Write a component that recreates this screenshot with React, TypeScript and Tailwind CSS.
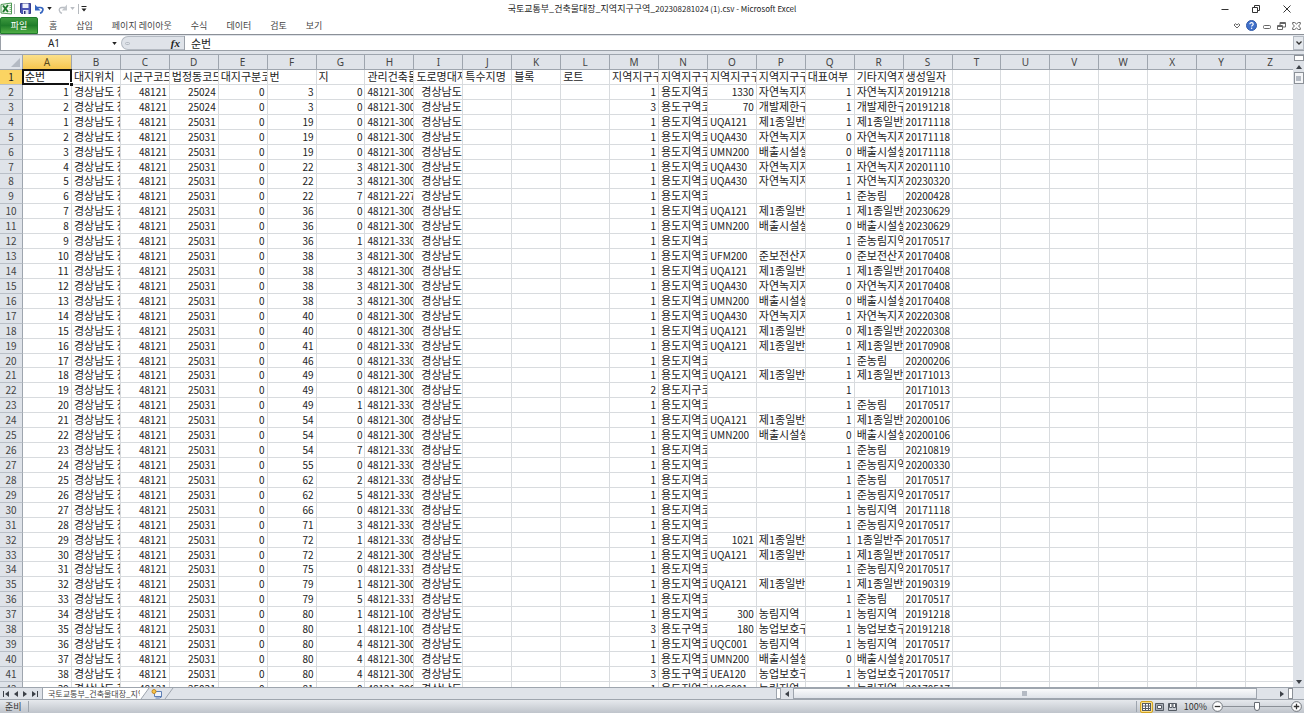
import React from 'react';
import { clsx } from 'clsx';

type Row = [
  no: number,
  dong: number,
  bun: number,
  ji: number,
  registry: string,
  kind: number,
  kindName: string,
  zoneCode: string | number,
  zoneName: string,
  main: number,
  etc: string,
  created: number
];

const AREA = '용도지역코';
const DISTRICT = '용도지구코';
const SECTION = '용도구역코';
const GREEN = '자연녹지지';
const HOUSE = '제1종일반';
const EMIT = '배출시설설';

const columns = 'ABCDEFGHIJKLMNOPQRSTUVWXYZ'.split('');

const headings = [
  '순번', '대지위치', '시군구코드', '법정동코드', '대지구분코', '번', '지', '관리건축물',
  '도로명대지', '특수지명', '블록', '로트', '지역지구구', '지역지구구', '지역지구구',
  '지역지구구', '대표여부', '기타지역지', '생성일자', '', '', '', '', '', '', '',
];

const rows: Row[] = [
  [1, 25024, 3, 0, '48121-300', 1, AREA, 1330, GREEN, 1, GREEN, 20191218],
  [2, 25024, 3, 0, '48121-300', 3, SECTION, 70, '개발제한구', 1, '개발제한구', 20191218],
  [1, 25031, 19, 0, '48121-300', 1, AREA, 'UQA121', HOUSE, 1, HOUSE, 20171118],
  [2, 25031, 19, 0, '48121-300', 1, AREA, 'UQA430', GREEN, 0, GREEN, 20171118],
  [3, 25031, 19, 0, '48121-300', 1, AREA, 'UMN200', EMIT, 0, EMIT, 20171118],
  [4, 25031, 22, 3, '48121-300', 1, AREA, 'UQA430', GREEN, 1, GREEN, 20201110],
  [5, 25031, 22, 3, '48121-300', 1, AREA, 'UQA430', GREEN, 1, GREEN, 20230320],
  [6, 25031, 22, 7, '48121-227', 1, AREA, '', '', 1, '준농림', 20200428],
  [7, 25031, 36, 0, '48121-300', 1, AREA, 'UQA121', HOUSE, 1, HOUSE, 20230629],
  [8, 25031, 36, 0, '48121-300', 1, AREA, 'UMN200', EMIT, 0, EMIT, 20230629],
  [9, 25031, 36, 1, '48121-330', 1, AREA, '', '', 1, '준농림지역', 20170517],
  [10, 25031, 38, 3, '48121-300', 1, AREA, 'UFM200', '준보전산지', 0, '준보전산지', 20170408],
  [11, 25031, 38, 3, '48121-300', 1, AREA, 'UQA121', HOUSE, 1, HOUSE, 20170408],
  [12, 25031, 38, 3, '48121-300', 1, AREA, 'UQA430', GREEN, 0, GREEN, 20170408],
  [13, 25031, 38, 3, '48121-300', 1, AREA, 'UMN200', EMIT, 0, EMIT, 20170408],
  [14, 25031, 40, 0, '48121-300', 1, AREA, 'UQA430', GREEN, 1, GREEN, 20220308],
  [15, 25031, 40, 0, '48121-300', 1, AREA, 'UQA121', HOUSE, 0, HOUSE, 20220308],
  [16, 25031, 41, 0, '48121-330', 1, AREA, 'UQA121', HOUSE, 1, HOUSE, 20170908],
  [17, 25031, 46, 0, '48121-330', 1, AREA, '', '', 1, '준농림', 20200206],
  [18, 25031, 49, 0, '48121-300', 1, AREA, 'UQA121', HOUSE, 1, HOUSE, 20171013],
  [19, 25031, 49, 0, '48121-300', 2, DISTRICT, '', '', 1, '', 20171013],
  [20, 25031, 49, 1, '48121-330', 1, AREA, '', '', 1, '준농림', 20170517],
  [21, 25031, 54, 0, '48121-300', 1, AREA, 'UQA121', HOUSE, 1, HOUSE, 20200106],
  [22, 25031, 54, 0, '48121-300', 1, AREA, 'UMN200', EMIT, 0, EMIT, 20200106],
  [23, 25031, 54, 7, '48121-330', 1, AREA, '', '', 1, '준농림', 20210819],
  [24, 25031, 55, 0, '48121-330', 1, AREA, '', '', 1, '준농림지역', 20200330],
  [25, 25031, 62, 2, '48121-330', 1, AREA, '', '', 1, '준농림', 20170517],
  [26, 25031, 62, 5, '48121-330', 1, AREA, '', '', 1, '준농림지역', 20170517],
  [27, 25031, 66, 0, '48121-330', 1, AREA, '', '', 1, '농림지역', 20171118],
  [28, 25031, 71, 3, '48121-330', 1, AREA, '', '', 1, '준농림지역', 20170517],
  [29, 25031, 72, 1, '48121-330', 1, AREA, 1021, HOUSE, 1, '1종일반주', 20170517],
  [30, 25031, 72, 2, '48121-300', 1, AREA, 'UQA121', HOUSE, 1, HOUSE, 20170517],
  [31, 25031, 75, 0, '48121-331', 1, AREA, '', '', 1, '준농림지역', 20170517],
  [32, 25031, 79, 1, '48121-300', 1, AREA, 'UQA121', HOUSE, 1, HOUSE, 20190319],
  [33, 25031, 79, 5, '48121-331', 1, AREA, '', '', 1, '준농림', 20170517],
  [34, 25031, 80, 1, '48121-100', 1, AREA, 300, '농림지역', 1, '농림지역', 20191218],
  [35, 25031, 80, 1, '48121-100', 3, SECTION, 180, '농업보호구', 1, '농업보호구', 20191218],
  [36, 25031, 80, 4, '48121-300', 1, AREA, 'UQC001', '농림지역', 1, '농림지역', 20170517],
  [37, 25031, 80, 4, '48121-300', 1, AREA, 'UMN200', EMIT, 0, EMIT, 20170517],
  [38, 25031, 80, 4, '48121-300', 3, SECTION, 'UEA120', '농업보호구', 1, '농업보호구', 20170517],
  [39, 25031, 81, 0, '48121-300', 1, AREA, 'UQC001', '농림지역', 1, '농림지역', 20170517],
];

const toCells = (r: Row): (string | number)[] => [
  r[0], '경상남도 창', 48121, r[1], 0, r[2], r[3], r[4], '  경상남도', '', '', '',
  r[5], r[6], r[7], r[8], r[9], r[10], r[11], '', '', '', '', '', '', '',
];

const isLatin = (value: string | number) => /^[\dA-Z-]+$/.test(String(value));

const Caret = ({ className }: { className?: string }) => (
  <svg viewBox="0 0 6 4" className={clsx('h-[3px] w-[5px] shrink-0', className)} fill="currentColor" aria-hidden="true">
    <path d="M0 0h6L3 4z" />
  </svg>
);

const Arrow = ({ dir, bar }: { dir: 'left' | 'right' | 'up' | 'down'; bar?: boolean }) => (
  <svg
    viewBox="0 0 8 8"
    className={clsx(
      'h-2 w-2',
      dir === 'left' && 'rotate-180',
      dir === 'up' && '-rotate-90',
      dir === 'down' && 'rotate-90'
    )}
    fill="#3c4148"
    aria-hidden="true"
  >
    <path d={bar ? 'M1 1l4 3-4 3zM6 1h1v6H6z' : 'M2 1l4 3-4 3z'} />
  </svg>
);

const TitleBar = () => (
  <header className="flex h-[17px] shrink-0 items-center bg-white">
    <div className="flex flex-1 items-center text-[#222]">
      <svg viewBox="0 0 13 13" className="h-[13px] w-[13px]" aria-hidden="true">
        <path d="M1 2.500L11.500 1v11L1 11z" fill="#f1f8ee" stroke="#4f9a56" />
        <path d="M9.500 3.500h1.500M9.500 5.500h1.500M9.500 7.500h1.500M9.500 9.500h1.500" stroke="#7fb582" />
        <path d="M3 3.500l5 6.500M8 3l-5 7" stroke="#217a2f" strokeWidth="2" />
      </svg>
      <span className="ml-px h-[10px] w-px bg-[#b5b9be]" />
      <button type="button" aria-label="저장" className="ml-[5px]">
        <svg viewBox="0 0 11 11" className="h-[11px] w-[11px]" aria-hidden="true">
          <path d="M0.5 0.5h10v10h-9l-1-1z" fill="#4b55b5" stroke="#343c8c" />
          <path d="M2.5 0.5h6v4.5h-6z" fill="#eef1fb" />
          <path d="M3 7h5.5v4H3z" fill="#dfe3f2" />
          <path d="M4 8h1.5v3H4z" fill="#2d3478" />
        </svg>
      </button>
      <button type="button" aria-label="실행 취소" className="ml-1">
        <svg viewBox="0 0 9 10" className="h-[10px] w-[9px]" fill="none" aria-hidden="true">
          <path d="M2 3.500h3.200c2.200 0 3 1.300 2.600 2.800C7.500 7.700 6.500 8.700 5 9.300" stroke="#3565c0" strokeWidth="1.700" />
          <path d="M0 0.500v6h5.500z" fill="#3565c0" />
        </svg>
      </button>
      <Caret className="ml-[3px]" />
      <button type="button" aria-label="다시 실행" className="ml-[6px]">
        <svg viewBox="0 0 9 10" className="h-[10px] w-[9px]" fill="none" aria-hidden="true">
          <path d="M7 3.500H4C1.800 3.500 1 4.800 1.300 6.300 1.500 7.700 2.500 8.700 4 9.300" stroke="#b9bdc3" strokeWidth="1.300" />
          <path d="M9 0.500v6H3.800z" fill="#c3c7cc" />
        </svg>
      </button>
      <Caret className="ml-[3px] text-[#b9bdc3]" />
      <span className="ml-[3px] h-[10px] w-px bg-[#b5b9be]" />
      <button type="button" aria-label="빠른 실행 도구 모음 사용자 지정" className="ml-[2px]">
        <svg viewBox="0 0 6 6" className="h-[6px] w-[6px]" aria-hidden="true">
          <path d="M0.500 0h5v1h-5zM0.500 2.500h5L3 5.500z" fill="#222" />
        </svg>
      </button>
    </div>
    <h1 className="whitespace-nowrap text-[8px] leading-[17px] text-[#222]">
      <span className="text-[9px]">국토교통부_건축물대장_지역지구구역_</span>202308281024 (1).csv - Microsoft Excel
    </h1>
    <div className="flex flex-1 items-center justify-end gap-[23px]">
      <button type="button" aria-label="최소화">
        <svg viewBox="0 0 8 8" className="h-2 w-2" aria-hidden="true">
          <path d="M0.500 4.500h7" stroke="#333" />
        </svg>
      </button>
      <button type="button" aria-label="이전 크기로">
        <svg viewBox="0 0 8 8" className="h-2 w-2" fill="none" stroke="#333" aria-hidden="true">
          <path d="M0.500 2.500h5v5h-5zM2.500 2V0.500h5v5H6" />
        </svg>
      </button>
      <button type="button" aria-label="닫기" className="mr-[13px]">
        <svg viewBox="0 0 8 8" className="h-2 w-2" stroke="#333" aria-hidden="true">
          <path d="M0.500 0.500l7 7M7.500 0.500l-7 7" />
        </svg>
      </button>
    </div>
  </header>
);

const RibbonTabs = () => (
  <nav className="flex h-[18px] shrink-0 border-b border-[#8b9097] bg-white text-[9px] leading-4 text-[#444]">
    <button
      type="button"
      className="w-[38px] rounded-t-[2px] border border-[#1f7a2a] bg-gradient-to-b from-[#3d9a3f] via-[#1f7d2a] to-[#4fae45] text-center leading-[15px] text-white"
    >
      파일
    </button>
    <div className="flex flex-1 gap-[19px] pl-[11px]">
      {['홈', '삽입', '페이지 레이아웃', '수식', '데이터', '검토', '보기'].map((tab) => (
        <button key={tab} type="button" className="whitespace-nowrap">
          {tab}
        </button>
      ))}
    </div>
    <div className="flex items-center gap-[5px] pr-[3px]">
      <button type="button" aria-label="리본 메뉴 최소화">
        <svg viewBox="0 0 8 6" className="h-[6px] w-2" fill="none" stroke="#666" aria-hidden="true">
          <path d="M1 2L2.500 0.700 4 2 5.500 0.700 7 2 4 5z" />
        </svg>
      </button>
      <button type="button" aria-label="도움말">
        <svg viewBox="0 0 12 12" className="h-[11px] w-[11px]" aria-hidden="true">
          <circle cx="6" cy="6" r="5.500" fill="#3f6fc9" stroke="#2c55a5" />
          <path d="M4.200 4.700C4.200 3.500 5 2.900 6 2.900s1.900.6 1.900 1.600C7.900 5.700 6.100 5.700 6.100 7.200" fill="none" stroke="#fff" strokeWidth="1.300" />
          <circle cx="6.100" cy="8.900" r="0.800" fill="#fff" />
        </svg>
      </button>
      <button type="button" aria-label="창 최소화" className="ml-px">
        <svg viewBox="0 0 8 8" className="h-2 w-2" fill="none" stroke="#666" aria-hidden="true">
          <rect x="0.500" y="3.500" width="7" height="3" rx="1" />
        </svg>
      </button>
      <button type="button" aria-label="창 복원" className="ml-px">
        <svg viewBox="0 0 9 8" className="h-2 w-[9px]" fill="none" stroke="#666" aria-hidden="true">
          <path d="M0.500 3.500h5v4h-5zM0.500 4.500h5M3 3V0.500h5.500v4.500H6M3 1.500h5.500" />
        </svg>
      </button>
      <button type="button" aria-label="창 닫기" className="ml-px">
        <svg viewBox="0 0 9 8" className="h-2 w-[9px]" fill="none" stroke="#666" aria-hidden="true">
          <path d="M0.700 0.500h2L4.500 2 6.300 0.500h2v1.800L6.500 4l1.800 1.700v1.800h-2L4.500 6 2.700 7.500h-2V5.700L2.500 4 0.700 2.300z" />
        </svg>
      </button>
    </div>
  </nav>
);

const FormulaBar = () => (
  <div className="flex h-[19px] shrink-0 bg-[#dfe3e9] pb-[3px] pt-px">
    <div className="flex flex-1 border-b border-[#9aa0a8] bg-white">
      <div className="flex w-[121px] items-center border-l border-[#9aa0a8]">
        <input
          aria-label="이름 상자"
          defaultValue="A1"
          className="w-[106px] min-w-0 bg-transparent text-center font-['Noto_Sans',sans-serif] text-[10px] leading-[14px] text-[#222] outline-none"
        />
        <button type="button" aria-label="이름 목록" className="ml-[5px] flex">
          <Caret className="text-[#222]" />
        </button>
      </div>
      <div className="flex w-[63px] items-center justify-between rounded-l-full border-y border-l border-[#b4bac2] bg-[#dfe3e9] pl-[3px] pr-1">
        <span className="h-[3px] w-[5px] rounded-full border border-[#b4bac2]" />
        <button type="button" aria-label="함수 삽입" className="font-['Liberation_Serif',serif] text-[11px] font-bold italic leading-3 text-[#222]">
          fx
        </button>
      </div>
      <input
        aria-label="수식 입력줄"
        defaultValue="순번"
        className="min-w-0 flex-1 border-l border-[#9aa0a8] bg-white pl-[6px] text-[11px] leading-[14px] text-[#222] outline-none"
      />
      <button
        type="button"
        aria-label="수식 입력줄 확장"
        className="flex w-[11px] items-center justify-center border border-[#b4bac2] bg-[#e3e7ec] text-[#333]"
      >
        <svg viewBox="0 0 6 4" className="h-1 w-[6px]" fill="none" stroke="currentColor" strokeWidth="1.300" aria-hidden="true">
          <path d="M0.500 0.500L3 3l2.500-2.500" />
        </svg>
      </button>
    </div>
  </div>
);

const headCell =
  'h-[15px] overflow-hidden border-b border-r border-[#9ea5ae] p-0 text-center text-[10px] font-normal leading-[14px]';
const rowHead =
  'border-b border-r border-b-[#b9bfc7] border-r-[#9ea5ae] p-0 text-center align-top text-[10px] font-normal leading-[13px]';

const Cell = ({ value }: { value: string | number }) => (
  <td
    className={clsx(
      'overflow-hidden whitespace-pre border-b border-r border-[#d8dbde] py-0 pl-[2px] pr-[2px] align-top leading-[13px]',
      isLatin(value) ? 'text-[10px]' : 'text-[11px]',
      typeof value === 'number' && 'text-right'
    )}
  >
    {value}
  </td>
);

/* The table is a little larger than its pane, so the last row runs under the sheet tabs. */
const Grid = () => (
  <div className="min-h-0 min-w-0 flex-1 overflow-hidden bg-white">
    <table className="h-[calc(100%+10px)] w-[calc(100%+2px)] table-fixed border-separate border-spacing-0 text-[#222]">
      <thead>
        <tr className="bg-[#dfe3e9] font-['Noto_Sans',sans-serif] text-[#444]">
          <th className="h-[15px] w-[23px] border-b border-r border-[#9ea5ae] p-0">
            <svg viewBox="0 0 10 10" className="ml-auto mr-[2px] h-[9px] w-[9px]" aria-hidden="true">
              <path d="M10 0v10H0z" fill="#b4bac3" />
            </svg>
          </th>
          {columns.map((name, i) => (
            <th
              key={name}
              scope="col"
              className={clsx(headCell, i === 0 && 'bg-gradient-to-b from-[#fbe08a] to-[#f6c64c] text-[#5a4a1c]')}
            >
              {name}
            </th>
          ))}
        </tr>
      </thead>
      <tbody>
        <tr>
          <th scope="row" className={clsx(rowHead, 'bg-[#fbd462]')}>
            1
          </th>
          {headings.map((text, i) =>
            i === 0 ? (
              <td key={i} className="relative px-[2px] py-0 align-top text-[11px] leading-[13px]">
                {text}
                <span className="absolute -inset-px bottom-0 right-0 border-2 border-[#111]" />
                <span className="absolute -bottom-px -right-px h-[4px] w-[4px] border-l border-t border-white bg-[#111]" />
              </td>
            ) : (
              <Cell key={i} value={text} />
            )
          )}
        </tr>
        {rows.map((row, r) => (
          <tr key={r}>
            <th scope="row" className={clsx(rowHead, 'bg-[#dfe3e9] text-[#444]')}>
              {r + 2}
            </th>
            {toCells(row).map((value, i) => (
              <Cell key={i} value={value} />
            ))}
          </tr>
        ))}
      </tbody>
    </table>
  </div>
);

const VerticalScroll = () => (
  <div className="flex w-[11px] shrink-0 flex-col items-center bg-[#dde1e7]">
    <span className="h-[6px] w-[10px] border border-[#8b9097] bg-white" />
    <button type="button" aria-label="위로 스크롤" className="flex h-[11px] items-center">
      <Arrow dir="up" />
    </button>
    <button
      type="button"
      aria-label="세로 스크롤 막대"
      className="flex h-[12px] w-[10px] items-center justify-center border border-[#8b9097] bg-[#f4f5f7]"
    >
      <span className="h-[5px] w-[5px] bg-[#b4bac3]" />
    </button>
    <span className="flex-1" />
    <button type="button" aria-label="아래로 스크롤" className="flex h-[11px] items-center">
      <Arrow dir="down" />
    </button>
  </div>
);

const SheetTabs = () => (
  <div className="flex h-3 shrink-0 border-t border-[#9ea5ae] bg-[#dfe3e9]">
    <div className="flex min-w-0 flex-[3]">
      <div className="flex w-[43px] items-center justify-between border-r border-[#9ea5ae] pl-[2px] pr-[3px]">
        <button type="button" aria-label="첫 시트" className="rotate-180">
          <Arrow dir="right" bar />
        </button>
        <button type="button" aria-label="이전 시트">
          <Arrow dir="left" />
        </button>
        <button type="button" aria-label="다음 시트">
          <Arrow dir="right" />
        </button>
        <button type="button" aria-label="마지막 시트">
          <Arrow dir="right" bar />
        </button>
      </div>
      <button
        type="button"
        className="w-[97px] overflow-hidden whitespace-nowrap bg-white pl-[5px] text-left text-[8px] leading-[11px] text-[#444]"
      >
        국토교통부_건축물대장_지역
      </button>
      <button type="button" aria-label="워크시트 삽입">
        <svg viewBox="0 0 34 11" className="h-[11px] w-[34px]" fill="none" aria-hidden="true">
          <path d="M0 0h9L1 11H0z" fill="#fff" />
          <path d="M9 0L1 11M33 0l-8 11" stroke="#9ea5ae" />
          <path d="M14.500 3.500h7v5h-7z" fill="#eef3fb" stroke="#5f7fb5" />
          <path d="M21.500 6v3l-2 1h-4" stroke="#5f7fb5" />
          <circle cx="14" cy="3.500" r="2" fill="#f6c64c" stroke="#c98a1e" />
        </svg>
      </button>
    </div>
    <div className="flex min-w-0 flex-[2] items-center">
      <span className="h-[11px] w-[5px] border border-[#9ea5ae] bg-white" />
      <button type="button" aria-label="왼쪽으로 스크롤" className="ml-px flex w-[11px] justify-center">
        <Arrow dir="left" />
      </button>
      <button
        type="button"
        aria-label="가로 스크롤 막대"
        className="flex h-[11px] flex-1 items-center justify-center border border-[#9ea5ae] bg-gradient-to-b from-[#fafbfc] to-[#dfe3e9]"
      >
        <span className="h-[5px] w-[5px] bg-[#b4bac3]" />
      </button>
      <button type="button" aria-label="오른쪽으로 스크롤" className="ml-[21px] flex">
        <Arrow dir="right" />
      </button>
      <span className="ml-[2px] h-[11px] w-[5px] border border-[#8b9097] bg-white" />
    </div>
    <span className="w-[11px]" />
  </div>
);

const viewButton = 'flex h-3 w-[13px] items-center justify-center';

const StatusBar = () => (
  <footer className="flex h-[14px] shrink-0 items-center border-t border-[#9ea5ae] bg-gradient-to-b from-[#e6e9ed] to-[#bfc4cb] text-[#333]">
    <span className="pl-[5px] text-[9px] leading-[13px]">준비</span>
    <span className="ml-[6px] h-[11px] w-px bg-[#9ea5ae]" />
    <span className="flex-1" />
    <span className="h-[11px] w-px bg-[#9ea5ae]" />
    <button type="button" aria-label="기본" className={clsx(viewButton, 'ml-[3px] rounded-[2px] border border-[#d1a21f] bg-[#fbe08a]')}>
      <svg viewBox="0 0 9 8" className="h-2 w-[9px]" aria-hidden="true">
        <path d="M0 0h9v8H0z" fill="#555b63" />
        <path d="M1 1h2v1.500H1zM4 1h2v1.500H4zM7 1h1v1.500H7zM1 3.500h2V5H1zM4 3.500h2V5H4zM7 3.500h1V5H7zM1 6h2v1H1zM4 6h2v1H4zM7 6h1v1H7z" fill="#fff" />
      </svg>
    </button>
    <button type="button" aria-label="페이지 레이아웃" className={viewButton}>
      <svg viewBox="0 0 9 8" className="h-2 w-[9px]" fill="none" aria-hidden="true">
        <path d="M0.500 0.500h8v7h-8z" fill="#a8adb5" stroke="#555b63" />
        <path d="M2.500 2.500h4v3h-4z" fill="#fff" stroke="#555b63" />
      </svg>
    </button>
    <button type="button" aria-label="페이지 나누기 미리 보기" className={viewButton}>
      <svg viewBox="0 0 9 8" className="h-2 w-[9px]" fill="none" aria-hidden="true">
        <path d="M0.500 0.500h8v7h-8z" fill="#c9cdd3" stroke="#555b63" />
        <path d="M1.500 0.500h2.500v4H1.500zM5 0.500h2.500v4H5z" fill="#fff" stroke="#555b63" />
      </svg>
    </button>
    <button type="button" className="w-[33px] text-center text-[9px] leading-[13px]">
      100%
    </button>
    <button type="button" aria-label="축소">
      <svg viewBox="0 0 12 12" className="h-[11px] w-[11px]" aria-hidden="true">
        <circle cx="6" cy="6" r="5.300" fill="#fff" stroke="#666b72" />
        <path d="M3 6h6" stroke="#333" strokeWidth="1.400" />
      </svg>
    </button>
    <input
      type="range"
      min="0"
      max="200"
      defaultValue="100"
      aria-label="확대/축소"
      className="h-[11px] w-[68px] appearance-none bg-[linear-gradient(#8b9097,#8b9097)] bg-[length:100%_1px] bg-center bg-no-repeat [&::-webkit-slider-thumb]:h-[9px] [&::-webkit-slider-thumb]:w-[6px] [&::-webkit-slider-thumb]:appearance-none [&::-webkit-slider-thumb]:rounded-b-[3px] [&::-webkit-slider-thumb]:border [&::-webkit-slider-thumb]:border-[#666b72] [&::-webkit-slider-thumb]:bg-white"
    />
    <button type="button" aria-label="확대" className="mr-[2px]">
      <svg viewBox="0 0 12 12" className="h-[11px] w-[11px]" aria-hidden="true">
        <circle cx="6" cy="6" r="5.300" fill="#fff" stroke="#666b72" />
        <path d="M3 6h6M6 3v6" stroke="#333" strokeWidth="1.400" />
      </svg>
    </button>
  </footer>
);

const App: React.FC = () => {
  return (
    <div className="flex h-screen flex-col overflow-hidden bg-white font-['Noto_Sans_CJK_KR',sans-serif]">
      <TitleBar />
      <RibbonTabs />
      <FormulaBar />
      <main className="flex min-h-0 flex-1 border-t border-[#9ea5ae]">
        <Grid />
        <VerticalScroll />
      </main>
      <SheetTabs />
      <StatusBar />
    </div>
  );
};

export default App;
